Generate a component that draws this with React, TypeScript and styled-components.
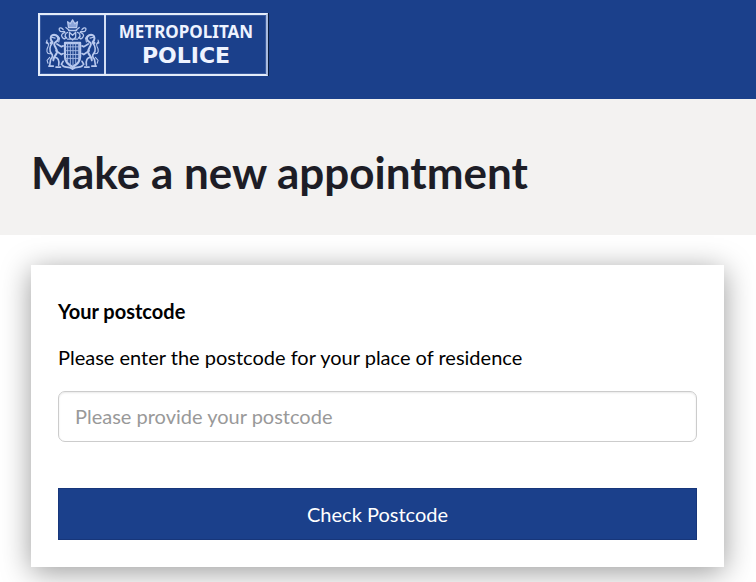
import React, { useState } from "react";
import styled, { createGlobalStyle } from "styled-components";

const GlobalStyle = createGlobalStyle`
  * { box-sizing: border-box; }
  body {
    margin: 0;
    background: #fff;
    color: #000;
    font-family: Lato, sans-serif;
    font-size: 20px;
    line-height: 28px;
  }
`;

const Header = styled.header`
  background: #1b408b;
  padding: 13px 38px 23px;
`;

const Logo = styled.a`
  display: inline-flex;
  vertical-align: top;
  width: 230px;
  height: 63px;
  border: 2px solid #e4ecfa;
  border-right-color: #a9bbe0;
  box-shadow: inset 0 0 0 1px #3a5b9f, 1px 0 0 #0a1a38;
  color: #eef3ff;
  text-decoration: none;
`;

const Crest = styled.svg`
  flex: none;
  width: 66px;
  height: 59px;
  border-right: 2px solid #d3def4;
`;

const Wordmark = styled.span`
  flex: 1;
  display: flex;
  flex-direction: column;
  align-items: center;
  padding-top: 5px;
`;

const Force = styled.span`
  font: 700 17px/24px "Noto Sans", sans-serif;
`;

const Service = styled.span`
  font: 700 22px/24px "DejaVu Sans", sans-serif;
`;

const Banner = styled.div`
  background: #f3f2f1;
  padding: 43px 31px 33px;
`;

const Title = styled.h1`
  margin: 0;
  color: #1d1d26;
  font-size: 44px;
  line-height: 60px;
  font-weight: 700;
`;

const Main = styled.main`
  padding: 30px 32px 30px 31px;
`;

const Card = styled.form`
  display: flex;
  flex-direction: column;
  padding: 32px 27px 27px;
  background: #fff;
  box-shadow: 0 5px 28px rgba(0, 0, 0, 0.4);
`;

const CardTitle = styled.h2`
  margin: 0 0 18px;
  font-size: 20px;
  line-height: 28px;
  font-weight: 700;
`;

const Label = styled.label`
  margin-bottom: 20px;
`;

const TextInput = styled.input`
  width: 100%;
  height: 51px;
  margin-bottom: 46px;
  padding: 0 16px 2px;
  border: 1px solid #ccc;
  border-radius: 7px;
  box-shadow: inset 0 1px 2px rgba(0, 0, 0, 0.09);
  background: #fff;
  color: #333;
  font: inherit;
  &::placeholder { color: #999; opacity: 1; }
`;

const SubmitButton = styled.button`
  height: 52px;
  border: 1px solid #17367a;
  background: #1b408b;
  color: #fff;
  font: inherit;
  cursor: pointer;
`;

function CrestSupporter() {
  return (
    <g>
      <path d="M14 19c-3-1-6 0-6 3 0 2 1 3 2 4l-2 1m6-8c2 1 3 3 2 5-1 2-4 2-4 4 0 3 4 5 3 9-1 3-4 4-4 8" strokeWidth="2.2" />
      <path d="M10 27c-3 3-4 8-1 11 2 2 1 4-1 6l-1 6M15 28l5 3 2-1M14 35l6 4 2-1M13 42c3 0 5 3 4 8M6 51h5M14 52h5" strokeWidth="1.8" />
      <path d="M8 38c-5 1-5-4-3-7 1-2 0-4-1-5M4 24l-1 3 3 1M7 42l-3 3 1 3M9 21l4 1M16 20l2 2-1 4" strokeWidth="1.2" />
      <path d="M22 13c-4-4-6 0-3 2 3 1 4-1 5 1-3 1-5 3-3 5 2 3 5 1 3-1M27 16c-3 1-4 4-1 6M25 11l4 3" strokeWidth="1.4" />
    </g>
  );
}

function RoyalCrest() {
  return (
    <Crest viewBox="0 0 64 60" aria-hidden="true" fill="none" stroke="#b9c9ee" strokeLinecap="round" strokeLinejoin="round">
      <g transform="translate(3 2) scale(0.91 0.98)">
        <CrestSupporter />
        <g transform="matrix(-1 0 0 1 65 0)"><CrestSupporter /></g>
        <path d="M28 11l-1-6 3 2 2.500-4 2.500 4 3-2-1 6z" fill="#8ba4d9" strokeWidth="1.400" />
        <path d="M28 14h9M29 16l3.500 3 3.500-3v5l-3.500 3-3.500-3zM27 23h11" strokeWidth="1.400" />
        <path d="M24 27h17v14c0 6-4 8-8.500 11C28 49 24 47 24 41z" fill="#1b408b" strokeWidth="2.400" />
        <path d="M27 27v19M30 27v22M33 27v23M36 27v21M39 27v18M24 31h17M24 35h17M24 39h17M24 43h17" stroke="#a9bce7" strokeWidth="1" />
        <path d="M21 50c2 4 7 0 11.500 4C37 50 42 54 44 50M22 46l-2 3M43 46l2 3" strokeWidth="1.800" />
      </g>
    </Crest>
  );
}

export default function App() {
  const [postcode, setPostcode] = useState("");
  return (
    <>
      <GlobalStyle />
      <Header>
        <Logo href="#" aria-label="Metropolitan Police">
          <RoyalCrest />
          <Wordmark>
            <Force>METROPOLITAN</Force>
            <Service>POLICE</Service>
          </Wordmark>
        </Logo>
      </Header>
      <Banner>
        <Title>Make a new appointment</Title>
      </Banner>
      <Main>
        <Card onSubmit={(event: React.FormEvent) => event.preventDefault()}>
          <CardTitle>Your postcode</CardTitle>
          <Label htmlFor="postcode">Please enter the postcode for your place of residence</Label>
          <TextInput
            id="postcode"
            type="text"
            autoComplete="postal-code"
            placeholder="Please provide your postcode"
            value={postcode}
            onChange={(event) => setPostcode(event.target.value)}
          />
          <SubmitButton type="submit">Check Postcode</SubmitButton>
        </Card>
      </Main>
    </>
  );
}
